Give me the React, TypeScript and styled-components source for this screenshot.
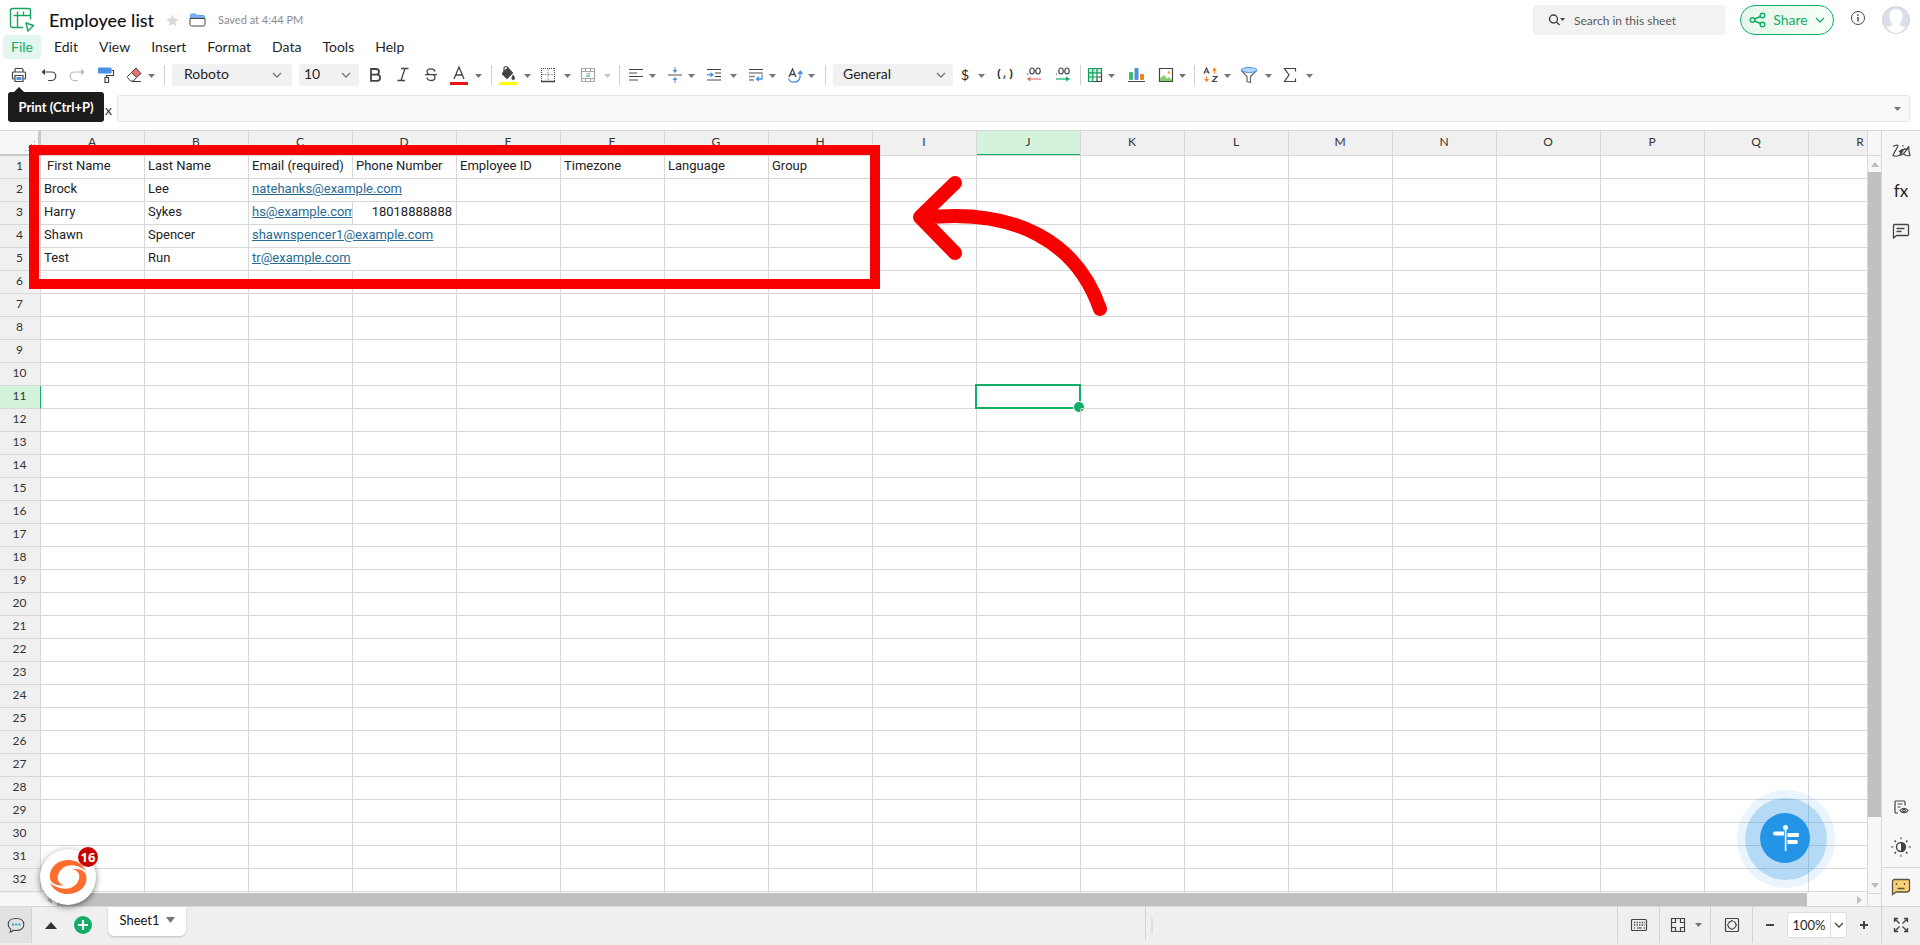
import React from "react";
import styled, { createGlobalStyle, css } from "styled-components";

const GlobalStyle = createGlobalStyle`
  * { box-sizing: border-box; }
  body { margin: 0; background: #fff; color: #1f1f1f; font: 14px/20px Lato, "Liberation Sans", sans-serif; }
  button, input, select { font: inherit; color: inherit; margin: 0; }
  svg { display: block; flex: none; }
`;

const LINE = "#d8d8d8";
const GREEN = "#12ad67";

/* ---------- shell ---------- */

const Shell = styled.div`
  position: relative;
  display: flex;
  flex-direction: column;
  height: 100vh;
  overflow: hidden;
`;

const PlainButton = styled.button`
  display: flex;
  align-items: center;
  justify-content: center;
  border: 0;
  padding: 0;
  background: none;
  cursor: pointer;
`;

/* ---------- title bar ---------- */

const TitleBar = styled.header`
  display: flex;
  align-items: center;
  justify-content: space-between;
  height: 35px;
  padding: 5px 10px 0 9px;
`;

const TitleSide = styled.div`
  display: flex;
  align-items: center;
`;

const DocTitle = styled.h1`
  margin: 0 12px 0 14px;
  font-size: 18px;
  line-height: 24px;
  font-weight: 500;
  color: #111;
`;

const FolderButton = styled(PlainButton)`
  margin-left: 10px;
`;

const SavedNote = styled.span`
  margin-left: 12px;
  font-size: 11px;
  color: #8b8b8b;
`;

const SearchBox = styled.label`
  display: flex;
  align-items: center;
  gap: 8px;
  width: 192px;
  height: 30px;
  padding-left: 15px;
  border-radius: 3px;
  background: #f2f2f2;
`;

const SearchInput = styled.input`
  flex: 1;
  min-width: 0;
  border: 0;
  padding: 2px 0 0;
  outline: 0;
  background: none;
  font-size: 12px;
  &::placeholder { color: #5a5a5a; opacity: 1; }
`;

const ShareButton = styled(PlainButton)`
  gap: 7px;
  width: 94px;
  height: 30px;
  margin: 0 16px 0 15px;
  border: 1px solid ${GREEN};
  border-radius: 15px;
  background: linear-gradient(90deg, #e6f5ea, #f8fff8);
  color: ${GREEN};
`;

const InfoButton = styled(PlainButton)`
  width: 16px;
  height: 16px;
  margin: 0 16px 4px 0;
`;

/* ---------- menu ---------- */

const MenuBar = styled.nav`
  display: flex;
  gap: 5px;
  padding-left: 3px;
  height: 25px;
  padding-bottom: 1px;
`;

const MenuItem = styled(PlainButton)<{ $active?: boolean }>`
  padding: 0 8px;
  border-radius: 4px;
  color: ${(p) => (p.$active ? GREEN : "#1f1f1f")};
  background: ${(p) => (p.$active ? "#e3f6f0" : "none")};
`;

/* ---------- toolbar ---------- */

const Toolbar = styled.div`
  display: flex;
  align-items: center;
  height: 30px;
`;

const Tools = styled.div<{ $gap: number; $before?: number; $after?: number }>`
  display: flex;
  align-items: center;
  gap: ${(p) => p.$gap}px;
  padding: 0 ${(p) => p.$after ?? 0}px 0 ${(p) => p.$before ?? 0}px;
`;

const Tool = styled(PlainButton)`
  width: 20px;
  height: 22px;
`;

const SplitTool = styled.div<{ $gap?: number }>`
  display: flex;
  align-items: center;
  gap: ${(p) => p.$gap ?? 1}px;
`;

const CaretButton = styled(PlainButton)<{ $faint?: boolean }>`
  width: 10px;
  height: 22px;
  padding-top: 1px;
  color: ${(p) => (p.$faint ? "#c4c4c4" : "#777")};
`;

const ToolDivider = styled.span<{ $after?: number }>`
  width: 1px;
  height: 20px;
  margin: 0 ${(p) => p.$after ?? 6}px 0 7px;
  background: #cfcfcf;
`;

const SelectWrap = styled.label<{ $width: number; $end: number }>`
  display: flex;
  align-items: center;
  position: relative;
  width: ${(p) => p.$width}px;
  height: 22px;
  border-radius: 3px;
  background: #f1f1f1;
  svg { position: absolute; right: ${(p) => p.$end}px; pointer-events: none; }
`;

const Select = styled.select<{ $start: number }>`
  appearance: none;
  width: 100%;
  height: 22px;
  border: 0;
  padding: 0 0 2px ${(p) => p.$start}px;
  background: none;
`;

const Glyph = styled.span<{ $size?: number }>`
  font-size: ${(p) => p.$size ?? 14}px;
  line-height: 20px;
`;

const MonoGlyph = styled.span`
  font: 700 10px/20px "Liberation Mono", monospace;
`;

/* ---------- formula bar ---------- */

const FormulaBar = styled.div`
  display: flex;
  align-items: center;
  gap: 5px;
  height: 40px;
  padding: 5px 10px 8px 8px;
`;

const Tooltip = styled.div`
  position: relative;
  z-index: 5;
  width: 96px;
  height: 30px;
  margin: -3px 0 0;
  border-radius: 3px;
  background: #1c1c1c;
  color: #fff;
  font-size: 13px;
  font-weight: 700;
  line-height: 30px;
  text-align: center;
  white-space: nowrap;
  &::before {
    content: "";
    position: absolute;
    left: 6px;
    top: -5px;
    border: 5px solid transparent;
    border-top: 0;
    border-bottom-color: #1c1c1c;
  }
`;

const FxMark = styled.span`
  width: 7px;
  margin-left: -4px;
  padding-top: 3px;
  font-size: 14px;
  color: #333;
`;

const FormulaField = styled.div`
  display: flex;
  align-items: center;
  flex: 1;
  height: 27px;
  padding-right: 8px;
  border: 1px solid #e4e4e4;
  border-radius: 3px;
  background: #f9f9f9;
  color: #777;
`;

const FormulaInput = styled.input`
  flex: 1;
  border: 0;
  outline: 0;
  background: none;
`;

/* ---------- workspace ---------- */

const Workspace = styled.main`
  display: flex;
  flex: 1;
  min-height: 0;
  border-top: 1px solid ${LINE};
`;

const SheetPane = styled.div`
  display: flex;
  flex-direction: column;
  flex: 1;
  min-width: 0;
`;

const GridRow = styled.div`
  display: flex;
  flex: 1;
  min-height: 0;
`;

const GridClip = styled.div`
  flex: 1;
  min-width: 0;
  overflow: hidden;
`;

const Grid = styled.table`
  table-layout: fixed;
  border-collapse: separate;
  border-spacing: 0;
  width: 1913px;
`;

const RowHeadCol = styled.col` width: 41px; `;
const DataCol = styled.col` width: 104px; `;

const Corner = styled.th`
  height: 25px;
  padding: 0 2px 3px;
  border-right: 3px solid #c9c9c9;
  border-bottom: 2px solid #c9c9c9;
  background: #f7f7f7;
  vertical-align: bottom;
  svg { margin-left: auto; }
`;

const ColHead = styled.th<{ $on?: boolean }>`
  height: 25px;
  padding: 0 1px 2px 0;
  border-right: 1px solid ${LINE};
  border-bottom: 1px solid ${LINE};
  background: ${(p) => (p.$on ? "#d4f3dc" : "#f0f0f0")};
  box-shadow: ${(p) => (p.$on ? `inset 0 -1px ${GREEN}` : "none")};
  color: #333;
  font-size: 12px;
  font-weight: 400;
  line-height: 18px;
`;

const RowHead = styled(ColHead)`
  height: 23px;
  ${(p) => p.$on && css`border-right-color: ${GREEN}; box-shadow: none;`}
`;

const Cell = styled.td<{ $right?: boolean; $indent?: boolean }>`
  position: relative;
  height: 23px;
  max-width: 0;
  padding: 0 ${(p) => (p.$right ? 4 : 0)}px 2px ${(p) => (p.$indent ? 6 : 3)}px;
  border-right: 1px solid ${LINE};
  border-bottom: 1px solid ${LINE};
  color: #222;
  font-family: Roboto, sans-serif;
  font-size: 13px;
  line-height: 18px;
  text-align: ${(p) => (p.$right ? "right" : "left")};
  white-space: nowrap;
`;

const CellClip = styled.div`
  overflow: hidden;
`;

const MailLink = styled.a`
  color: #2a6a94;
  text-decoration: underline;
`;

const CellCursor = styled.span`
  position: absolute;
  inset: -2px -1px -1px -2px;
  border: 2px solid ${GREEN};
  &::after {
    content: "";
    position: absolute;
    right: -6px;
    bottom: -6px;
    width: 10px;
    height: 10px;
    border: 1px solid #fff;
    border-radius: 50%;
    background: ${GREEN};
  }
`;

const VScroll = styled.div`
  display: flex;
  flex-direction: column;
  align-items: center;
  width: 14px;
  border-left: 1px solid ${LINE};
  background: #f7f7f7;
  color: #bdbdbd;
`;

const VScrollHead = styled.div`
  width: 100%;
  height: 25px;
  border-bottom: 1px solid ${LINE};
`;

const ScrollArrow = styled.span`
  display: flex;
  align-items: center;
  justify-content: center;
  width: 13px;
  height: 16px;
`;

const VTrack = styled.div`
  flex: 1;
  width: 100%;
  padding-bottom: 60px;
`;

const Thumb = styled.div`
  height: 100%;
  background: #c0c0c0;
`;

const HScroll = styled.div`
  display: flex;
  align-items: stretch;
  height: 13px;
  padding-left: 41px;
  background: #f7f7f7;
  color: #bdbdbd;
`;

const HArrow = styled.span`
  display: flex;
  align-items: center;
  justify-content: center;
  width: 16px;
`;

const HTrack = styled.div`
  flex: 1;
  padding-right: 44px;
`;

const ScrollCorner = styled.div`
  width: 14px;
  border: 1px solid ${LINE};
  border-width: 1px 0 0 1px;
`;

const SideBar = styled.aside`
  display: flex;
  flex-direction: column;
  align-items: center;
  width: 39px;
  border-left: 1px solid ${LINE};
  background: #f7f7f7;
`;

const SideTool = styled(PlainButton)`
  width: 38px;
  height: 40px;
`;

const SideFill = styled.span` flex: 1; `;

const SideFoot = styled(SideTool)`
  height: 39px;
  border-top: 1px solid ${LINE};
`;

/* ---------- footer ---------- */

const Footer = styled.footer`
  display: flex;
  height: 39px;
  padding-bottom: 2px;
  border-top: 1px solid ${LINE};
  background: #efefef;
`;

const ChatCell = styled(PlainButton)`
  width: 32px;
  border-right: 1px solid #d4d4d4;
  background: #e2e2e2;
`;

const FootTool = styled(PlainButton)<{ $width: number }>`
  width: ${(p) => p.$width}px;
`;

const AddSheet = styled(PlainButton)`
  align-self: center;
  width: 18px;
  height: 18px;
  margin: 0 16px 0 4px;
  border-radius: 50%;
  background: ${GREEN};
`;

const SheetTab = styled(PlainButton)`
  gap: 6px;
  width: 78px;
  height: 29px;
  padding: 0 0 3px;
  border-radius: 0 0 6px 6px;
  background: #fff;
  box-shadow: 0 1px 2px rgba(0, 0, 0, 0.2);
  color: #111;
  font-size: 13px;
  svg { color: #777; }
`;

const Grip = styled.div`
  margin: 0 0 3px;
  padding: 11px 5px;
  border-left: 1px solid #d4d4d4;
  &::after {
    content: "";
    display: block;
    width: 2px;
    height: 16px;
    background: #dedede;
  }
`;

const Gap = styled.span<{ $share: number }>` flex: ${(p) => p.$share}; `;

const FootGroup = styled.div<{ $width: number }>`
  display: flex;
  align-items: center;
  justify-content: center;
  gap: 8px;
  width: ${(p) => p.$width}px;
  border-left: 1px solid #d4d4d4;
  color: #777;
`;

const ZoomBox = styled.div`
  display: flex;
  width: 60px;
  height: 26px;
  border: 1px solid #ddd;
  border-radius: 3px;
  background: #fff;
  color: #1f1f1f;
`;

const ZoomInput = styled.input`
  width: 43px;
  border: 0;
  border-right: 1px solid #ddd;
  padding: 0;
  background: none;
  text-align: center;
  font-size: 13px;
`;

/* ---------- overlays ---------- */

const HighlightFrame = styled.div`
  position: absolute;
  left: 29px;
  top: 145px;
  width: 851px;
  height: 144px;
  border: 10px solid #f70000;
`;

const HighlightArrow = styled.svg`
  position: absolute;
  left: 910px;
  top: 170px;
`;

const BrandBubble = styled.button`
  position: absolute;
  left: 40px;
  bottom: 40px;
  display: flex;
  align-items: center;
  justify-content: center;
  width: 56px;
  height: 56px;
  border: 0;
  padding: 0;
  border-radius: 50%;
  background: #fff;
  box-shadow: 0 2px 6px rgba(0, 0, 0, 0.5);
`;

const Badge = styled.span`
  position: absolute;
  right: -2px;
  top: -2px;
  width: 20px;
  height: 20px;
  border-radius: 50%;
  background: #c90000;
  color: #fff;
  font: 700 13px/20px "Open Sans", sans-serif;
`;

const GuideBubble = styled.button`
  position: absolute;
  right: 85px;
  bottom: 57px;
  display: flex;
  align-items: center;
  justify-content: center;
  width: 98px;
  height: 98px;
  border: 8px solid rgba(36, 148, 230, 0.1);
  padding: 0 2px 2px 0;
  border-radius: 50%;
  background: rgba(36, 148, 230, 0.34);
  background-clip: padding-box;
`;

const GuideCore = styled.span`
  display: flex;
  align-items: center;
  justify-content: center;
  width: 50px;
  height: 50px;
  border-radius: 50%;
  background: #2494e6;
`;

/* ---------- drawings ---------- */

type IconProps = { w?: number; h?: number; s?: string; sw?: number; children: React.ReactNode };
const Icon = ({ w = 18, h = 18, s = "#444", sw = 1, children }: IconProps) => (
  <svg width={w} height={h} viewBox={`0 0 ${w} ${h}`} fill="none" stroke={s} strokeWidth={sw} aria-hidden="true">
    {children}
  </svg>
);

const Caret = ({ w = 7, h = 4 }: { w?: number; h?: number }) => (
  <svg width={w} height={h} viewBox="0 0 6 4" fill="currentColor" preserveAspectRatio="none" aria-hidden="true">
    <path d="M0 0h6L3 4z" />
  </svg>
);

const Chevron = ({ s = "#777" }: { s?: string }) => (
  <Icon w={10} h={7} s={s} sw={1.3}><path d="M1 1l4 4 4-4" /></Icon>
);

const LogoIcon = () => (
  <Icon w={26} h={26} s="#17a45c" sw={1.4}>
    <path d="M14 20.500H3.500a2 2 0 0 1-2-2V3.500a2 2 0 0 1 2-2h16a2 2 0 0 1 2 2v9M4.500 8.500h17M8.500 4.500v16M14.500 4.500v4" />
    <path d="M17 16l7.500 2.500-5.500 5.500z" strokeLinejoin="round" />
  </Icon>
);
const StarIcon = () => (
  <svg width="13" height="13" viewBox="0 0 24 24" fill="#d9d9d9" aria-hidden="true">
    <path d="M12 1l3.300 7.300 8 .9-6 5.400 1.700 7.900L12 18.500l-7 4 1.700-7.900-6-5.400 8-.9z" />
  </svg>
);
const FolderIcon = () => (
  <Icon w={17} h={14}>
    <path d="M1.500 5V2a1 1 0 0 1 1-1h4l2 1.500h6a1 1 0 0 1 1 1V5z" fill="#7db4f5" stroke="#5b9df0" />
    <path d="M1 5.500h15v6a1.500 1.500 0 0 1-1.500 1.500h-12A1.500 1.500 0 0 1 1 11.500z" fill="#fff" />
  </Icon>
);
const SearchIcon = () => (
  <Icon w={18} h={14} sw={1.4}>
    <circle cx="5.500" cy="6" r="4" /><path d="M8.500 9l3 3" />
    <path d="M12 5h5l-2.500 3z" fill="#444" stroke="none" />
  </Icon>
);
const ShareIcon = () => (
  <Icon w={17} h={16} s={GREEN} sw={1.4}>
    <circle cx="3.500" cy="8" r="2.300" /><circle cx="13.500" cy="3.500" r="2.300" /><circle cx="13.500" cy="12.500" r="2.300" />
    <path d="M5.700 7l5.600-2.500M5.700 9l5.600 2.500" />
  </Icon>
);
const InfoIcon = () => (
  <Icon w={16} h={16}><circle cx="8" cy="8" r="6.500" /><path d="M8 7v4.500M8 4.200v1.500" strokeWidth="1.500" /></Icon>
);
const AvatarIcon = () => (
  <svg width="28" height="28" viewBox="0 0 28 28" aria-label="Account">
    <circle cx="14" cy="14" r="13.500" fill="#dadfeb" stroke="#d5d5d5" />
    <path d="M14 3c4.500 0 6.500 3 6.500 7 0 4-1.500 6-3 8 .5 2 4 2.500 6 3.500C21 25 18 27 14 27s-7-2-9.500-5.500c2-1 5.500-1.500 6-3.500-1.500-2-3-4-3-8 0-4 2-7 6.500-7z" fill="#fff" />
  </svg>
);

const PrintIcon = () => (
  <Icon w={16} h={16} sw={1.2}>
    <path d="M4 5V2.500A1 1 0 0 1 5 1.500h6a1 1 0 0 1 1 1V5" />
    <path d="M3.500 12H2.500a1 1 0 0 1-1-1V6a1 1 0 0 1 1-1h11a1 1 0 0 1 1 1v5a1 1 0 0 1-1 1h-1" />
    <path d="M4 8.500h8v6H4z" fill="#fff" /><path d="M5.500 10h5v3h-5z" fill="#4a90e2" stroke="none" />
  </Icon>
);
const UndoIcon = ({ flip }: { flip?: boolean }) => (
  <Icon w={17} h={14} s={flip ? "#b9b9b9" : "#444"} sw={1.2}>
    <g transform={flip ? "translate(17 0) scale(-1 1)" : undefined}>
      <path d="M2 4h9.500a4 4 0 0 1 0 8.500H8" /><path d="M5 .8L1.500 4 5 7.200z" fill={flip ? "#b9b9b9" : "#444"} stroke="none" />
    </g>
  </Icon>
);
const PaintIcon = () => (
  <Icon w={18} h={18} sw={1.2}>
    <rect x="1" y="1.500" width="13.500" height="6" rx="1" fill="#4a90e2" stroke="none" />
    <path d="M14.500 4.500h2V9.500h-7v2.500" /><path d="M8 11.500h3.500v5H8z" />
  </Icon>
);
const EraserIcon = () => (
  <Icon w={18} h={16}>
    <path d="M10 1l5 5.500-4.500 4L5.500 5.500z" fill="#e57373" />
    <path d="M5.500 5.500l5 5L7.500 14H4.500L1.500 10.500V9.500z" fill="#fff" /><path d="M6 14.500h9" />
  </Icon>
);
const BoldIcon = () => (
  <Icon w={14} h={16} sw={1.8}><path d="M3 2h5.200a2.800 2.800 0 0 1 0 5.600H3zM3 7.600h6a3 3 0 0 1 0 6.200H3z" /></Icon>
);
const ItalicIcon = () => <Icon w={14} h={16} sw={1.3}><path d="M5 1.500h7.500M1.500 13.500H9M9 1.500L5 13.500" /></Icon>;
const StrikeIcon = () => (
  <Icon w={14} h={16} sw={1.3}>
    <path d="M11 4.500C10.500 2.500 9 1.800 7 1.800c-2.200 0-4 1-4 2.900 0 1.300 1 2.200 2.500 2.900M3 10.500c.3 2 1.800 3 4 3s4-1 4-3c0-1.200-.6-2-1.500-2.500M1 7.700h12" />
  </Icon>
);
const TextColorIcon = () => (
  <Icon w={18} h={20} sw={1.300}>
    <path d="M4 14L9 2l5 12M5.800 10h6.400" /><path d="M0 17h18v3H0z" fill="#ea1515" stroke="none" />
  </Icon>
);
const BucketIcon = () => (
  <Icon w={18} h={20} sw={1.2}>
    <path d="M4 7.500l5-4.500 4.500 5-5.500 5.500-4.500-4.500z" fill="#444" /><path d="M5 7V3.500a2 2 0 0 1 4 0V6" />
    <path d="M14 9.500c1.500 2 2 3 2 3.800a1.800 1.800 0 0 1-3.600 0c0-.8.600-1.800 1.600-3.800z" fill="#444" stroke="none" />
    <path d="M0 17h18v3H0z" fill="#ff0" stroke="none" />
  </Icon>
);
const BorderIcon = () => (
  <Icon w={16} h={16}>
    <path d="M1.500 1v13M14.500 1v13M1 1.500h14" strokeDasharray="1 1" />
    <path d="M8 2v12M2 7.500h12" strokeDasharray="2 1" stroke="#999" /><path d="M1 14.500h14" strokeWidth="1.500" />
  </Icon>
);
const MergeIcon = () => (
  <Icon w={16} h={16} s="#a8a8a8" sw={1.2}>
    <path d="M1.500 1.500h13v13h-13zM1.500 4.500h13M1.500 11.500h13M5.500 1.500v3M10.500 1.500v3M5.500 11.500v3M10.500 11.500v3" />
    <path d="M6.500 6.800c1-.6 3-.6 3 .7v2.700M9.500 8.200c-2 0-3 .2-3 1s2 .8 3-.2" stroke="#8fd3ae" />
  </Icon>
);
const AlignIcon = () => (
  <Icon w={16} h={14}>
    <path d="M1 1.500h14M1 8.500h14" /><path d="M1 5h8M1 12h9" stroke="#888" strokeWidth="1.500" />
  </Icon>
);
const VAlignIcon = () => (
  <Icon w={16} h={16} s="#4a90e2">
    <path d="M1 8h14" stroke="#888" strokeWidth="1.500" />
    <path d="M8 0v4M8 16v-4" /><path d="M5.500 3h5L8 6zM5.500 13h5L8 10z" fill="#4a90e2" stroke="none" />
  </Icon>
);
const IndentIcon = () => (
  <Icon w={16} h={14}>
    <path d="M1 1.500h14M9 5h6M9 8.500h6" /><path d="M1 12h14" stroke="#888" strokeWidth="1.500" />
    <path d="M1 6.700h4" stroke="#4a90e2" strokeWidth="1.300" /><path d="M4.500 4l3.500 2.700-3.500 2.800z" fill="#4a90e2" stroke="none" />
  </Icon>
);
const WrapIcon = () => (
  <Icon w={16} h={14}>
    <path d="M1 1.500h14" /><path d="M1 5h14M1 8.500h6M1 12h5" stroke="#888" strokeWidth="1.500" />
    <path d="M14 6.500v4.500H10" stroke="#4a90e2" strokeWidth="1.300" /><path d="M11 8l-3.500 3 3.500 2.800z" fill="#4a90e2" stroke="none" />
  </Icon>
);
const RotateIcon = () => (
  <Icon w={17} h={17} sw={1.3}>
    <path d="M2 10L5.500 2 9 10M3.300 7.500h4.500" />
    <path d="M1.500 11.500c1.500 4.500 10 5.500 11.500-1V6.500" stroke="#4a90e2" /><path d="M10.200 7l3.300-4 2.500 4z" fill="#4a90e2" stroke="none" />
  </Icon>
);
const DecimalIcon = ({ more }: { more?: boolean }) => (
  <Icon w={18} h={18} sw={1.2}>
    <path d="M2 8h1.200" /><ellipse cx="7" cy="5" rx="2.200" ry="3" /><ellipse cx="13" cy="5" rx="2.200" ry="3" />
    {more ? (
      <g stroke={GREEN} fill={GREEN}><path d="M2 13h11" /><path d="M12 10.500l4 2.500-4 2.500z" stroke="none" /></g>
    ) : (
      <g stroke="#e57373" fill="#e57373"><path d="M4 13h12" /><path d="M5.500 10.500L1.500 13l4 2.500z" stroke="none" /></g>
    )}
  </Icon>
);
const TableIcon = () => (
  <Icon w={16} h={16} s="#0c9d58" sw={1.2}>
    <path d="M1.500 1.500h13v4h-9v9h-4z" fill="#c9efd8" stroke="none" />
    <path d="M10 14.500h4.500V6M5.500 14.500H10M10 10h4.500M10 10v4.500" stroke="#444" />
    <path d="M1.500 1.500h13V6M1.500 1.500v13h4M1.500 5.800h13M1.500 10H10M5.800 1.500v13M10 1.500V10" />
  </Icon>
);
const ChartIcon = () => (
  <Icon w={18} h={16}>
    <rect x="2" y="5" width="4" height="8" rx="1" fill="#45b96b" stroke="none" />
    <rect x="7.500" y="1" width="4" height="12" rx="1" fill="#4a90e2" stroke="none" />
    <rect x="13" y="7" width="4" height="6" rx="1" fill="#f58220" stroke="none" /><path d="M1 14.500h17" />
  </Icon>
);
const ImageIcon = () => (
  <Icon w={16} h={16} sw={1.2}>
    <path d="M1.500 1.500h13v13h-13z" fill="#fff" /><path d="M2 14v-2.500L6 8l3 3.500 2-1.500 3 3v1z" fill="#85cf72" stroke="none" />
    <circle cx="11" cy="5.500" r="1.300" fill="#f5b11d" stroke="none" />
  </Icon>
);
const SortIcon = () => (
  <Icon w={16} h={16} sw={1.2}>
    <path d="M1 6.500L3.500 1 6 6.500M2 5h3.200M9.500 9.500H14L9.500 14.500h4.700" />
    <path d="M11.500 6.500V3M3.500 9.500v3" stroke="#f58220" />
    <path d="M9 3.500L11.500.5 14 3.500zM1 12l2.500 3L6 12z" fill="#f58220" stroke="none" />
  </Icon>
);
const FilterIcon = () => (
  <Icon w={18} h={18} sw={1.2}>
    <path d="M1.500 4.500L7 10.500v5l3.500 1v-6l6-6" fill="#fff" stroke="#666" />
    <ellipse cx="9" cy="4" rx="7.500" ry="2.500" fill="#b5d8ff" stroke="#4a90e2" />
  </Icon>
);
const SigmaIcon = () => (
  <Icon w={14} h={16} sw={1.2}><path d="M12.500 4.500V1.500h-11L6 8l-4.500 6.500h11v-3" /></Icon>
);
const CornerDots = () => (
  <svg width="12" height="10" viewBox="0 0 12 10" fill="#999" aria-hidden="true">
    <path d="M10 0h1v1h-1zM7 3h1v1H7zM10 3h1v1h-1zM4 6h1v1H4zM7 6h1v1H7zM10 6h1v1h-1zM1 9h1v1H1zM4 9h1v1H4zM7 9h1v1H7zM10 9h1v1h-1z" />
  </svg>
);

const ZiaIcon = () => (
  <Icon w={20} h={16} sw={1.2}>
    <path d="M2 3.500C4 2.200 6.500 1.800 7 2.600S3.500 8 2 12.500c1.500.8 4.500.8 6.500-.3 1.500-1.200 3.500-4.500 4-5.700-2.500 1.500-3.500 4-2.800 5.700 2 .2 6-5 8-9 0 2 .3 6.800 1.300 9.300-1.500.6-5.500.2-7-2.500M12 2v1.400M8 9c2-2 6-3.500 9-3" />
  </Icon>
);
const CommentIcon = () => (
  <Icon w={18} h={18} sw={1.3}>
    <path d="M1.500 16V3.500a1 1 0 0 1 1-1h13a1 1 0 0 1 1 1v9a1 1 0 0 1-1 1H4.500z" strokeLinejoin="round" /><path d="M4.500 6.500h8M4.500 9.500h5" />
  </Icon>
);
const PageEyeIcon = () => (
  <Icon w={16} h={16} sw={1.2}>
    <path d="M5 14H3a1 1 0 0 1-1-1V3a1 1 0 0 1 1-1h8a1 1 0 0 1 1 1v3.500M4.500 5h5M4.500 8h3" />
    <path d="M7 11.500c2-3 6-3 8 0-2 3-6 3-8 0z" fill="#f7f7f7" /><circle cx="11" cy="11.500" r="1.300" />
  </Icon>
);
const SunIcon = () => (
  <Icon w={20} h={20} sw={1.4}>
    <circle cx="10" cy="10" r="4.500" /><path d="M10 5.500a4.500 4.500 0 0 1 0 9z" fill="#444" stroke="none" />
    <path d="M10 0v2.500M10 17.500V20M0 10h2.500M17.500 10H20" stroke="#888" /><path d="M3.500 3.500l1.500 1.500M15 15l1.500 1.500M16.500 3.500L15 5M5 15l-1.500 1.500" />
  </Icon>
);
const FaceIcon = () => (
  <Icon w={20} h={18} s="#5c5444" sw={1.3}>
    <path d="M1.500 16.500V3.500a2 2 0 0 1 2-2h14a1 1 0 0 1 1 1v9c0 1.500-1 2.500-3 2.500H5z" fill="#fbcf74" />
    <path d="M5.500 5v2M13.500 5v2M6.500 10.500h7" />
  </Icon>
);
const ChatIcon = () => (
  <Icon w={18} h={16} sw={1.1}>
    <path d="M3 15c.8-1 1-2 .8-2.800C2 11 1.200 9.500 1.200 7.500c0-4 3.500-6 7.800-6s7.800 2 7.800 6-3.500 6-7.800 6c-1 0-1.800 0-2.500-.3C5.500 14.500 4 15 3 15z" />
    <path d="M5 7.500h8.500" stroke="#2f9fc4" strokeWidth="2" strokeDasharray="2 1.200" />
  </Icon>
);
const KeyboardIcon = () => (
  <Icon w={18} h={14} sw={1.2}>
    <rect x="1.500" y="1.500" width="15" height="11" rx="1" /><path d="M4 4.500h11M4 7h11" strokeDasharray="1.300 1.300" strokeWidth="1.500" /><path d="M4 10h1.300M7 10h5M13.500 10H15" strokeWidth="1.500" stroke="#777" />
  </Icon>
);
const FreezeIcon = () => (
  <Icon w={16} h={16} sw={1.2}>
    <path d="M1.500 1.500h13v13h-13zM5.500 1.500v4h-4M10.500 1.500v4h4M5.500 14.500v-4h-4M10.500 14.500v-4h4" />
  </Icon>
);
const FocusIcon = () => (
  <Icon w={16} h={16} sw={1.2}>
    <rect x="1.500" y="1.500" width="13" height="13" rx="1" />
    <circle cx="8" cy="8" r="4" strokeDasharray="4.280 2" strokeDashoffset="-1" />
    <path d="M8 3v1.500M8 11.500V13M3 8h1.500M11.500 8H13" strokeWidth="1.500" />
  </Icon>
);
const ExpandIcon = () => (
  <Icon w={16} h={16} sw={1.3}>
    <path d="M1.500 5V1.500H5M1.500 1.500l5 5M11 1.500h3.500V5M14.500 1.500l-5 5M1.500 11v3.500H5M1.500 14.500l5-5M11 14.500h3.500V11M14.500 14.500l-5-5" />
  </Icon>
);
const SwirlIcon = () => (
  <svg width="38" height="36" viewBox="0 0 38 36" fill="#ff6d2e" aria-hidden="true">
    <path d="M37 12C33 4 26 .5 18.500 1 8 1.500 .8 8.500 .8 17.500c0 6 5 9.500 14 8.800C9 24.500 7.500 20 9.500 15 12 8.500 18 5.500 25 6.500c5 .7 8.500 2.500 12 5.500z" />
    <path d="M1 24c4 8 11 11.500 18.500 11C30 34.500 37.500 28 37.500 19c0-6-5-9.500-13.500-8.800 6 1.800 7.500 6 5.500 11C27 27.500 21 30.500 13.500 29.500 8 28.800 4.500 27 1 24z" />
  </svg>
);
const SignpostIcon = () => (
  <svg width="28" height="28" viewBox="0 0 28 28" fill="#fff" aria-hidden="true">
    <circle cx="14.500" cy="3.500" r="2.500" /><path d="M13.800 6h1.600v21h-1.600z" />
    <path d="M3.500 7.500H13v4H3.500L1.500 9.500zM16.500 9h11l1 2-1 2h-11zM16.500 16h9.500l1 2-1 2h-9.500z" />
  </svg>
);

/* ---------- pieces ---------- */

const DropTool = ({ label, gap, faint, children }: { label: string; gap?: number; faint?: boolean; children: React.ReactNode }) => (
  <SplitTool $gap={gap}>
    <Tool aria-label={label}>{children}</Tool>
    <CaretButton aria-label={`${label} options`} $faint={faint}><Caret /></CaretButton>
  </SplitTool>
);

const Picker = ({ label, value, width, start, end }: { label: string; value: string; width: number; start: number; end: number }) => (
  <SelectWrap $width={width} $end={end}>
    <Select aria-label={label} $start={start} defaultValue={value}><option>{value}</option></Select>
    <Chevron />
  </SelectWrap>
);

const COLUMNS = "ABCDEFGHIJKLMNOPQR".split("");
const ROW_COUNT = 32;

type CellData = { text: string; mail?: boolean; span?: number; right?: boolean; indent?: boolean };
const t = (text: string): CellData => ({ text });
const DATA: CellData[][] = [
  [{ text: "First Name", indent: true }, t("Last Name"), t("Email (required)"), t("Phone Number"), t("Employee ID"), t("Timezone"), t("Language"), t("Group")],
  [t("Brock"), t("Lee"), { text: "natehanks@example.com", mail: true, span: 2 }],
  [t("Harry"), t("Sykes"), { text: "hs@example.com", mail: true }, { text: "18018888888", right: true }],
  [t("Shawn"), t("Spencer"), { text: "shawnspencer1@example.com", mail: true, span: 2 }],
  [t("Test"), t("Run"), { text: "tr@example.com", mail: true, span: 2 }],
];

const SheetRow = ({ index }: { index: number }) => {
  const filled = DATA[index] ?? [];
  const used = filled.reduce((n, c) => n + (c.span ?? 1), 0);
  const isActive = index === 10;
  return (
    <tr>
      <RowHead scope="row" $on={isActive}>{index < ROW_COUNT ? index + 1 : null}</RowHead>
      {filled.map((c) => (
        <Cell key={c.text} colSpan={c.span} $right={c.right} $indent={c.indent}>
          <CellClip>{c.mail ? <MailLink href={`mailto:${c.text}`}>{c.text}</MailLink> : c.text}</CellClip>
        </Cell>
      ))}
      {COLUMNS.slice(used).map((col) => (
        <Cell key={col}>{isActive && col === "J" ? <CellCursor /> : null}</Cell>
      ))}
    </tr>
  );
};

const MENUS = ["File", "Edit", "View", "Insert", "Format", "Data", "Tools", "Help"];

export default function App() {
  return (
    <>
      <GlobalStyle />
      <Shell>
        <TitleBar>
          <TitleSide>
            <LogoIcon />
            <DocTitle>Employee list</DocTitle>
            <StarIcon />
            <FolderButton aria-label="Move to folder"><FolderIcon /></FolderButton>
            <SavedNote>Saved at 4:44 PM</SavedNote>
          </TitleSide>
          <TitleSide>
            <SearchBox>
              <SearchIcon />
              <SearchInput aria-label="Search in this sheet" placeholder="Search in this sheet" />
            </SearchBox>
            <ShareButton><ShareIcon />Share<Chevron s={GREEN} /></ShareButton>
            <InfoButton aria-label="Information"><InfoIcon /></InfoButton>
            <AvatarIcon />
          </TitleSide>
        </TitleBar>

        <MenuBar>
          {MENUS.map((m) => <MenuItem key={m} $active={m === "File"}>{m}</MenuItem>)}
        </MenuBar>

        <Toolbar>
          <Tools $gap={9} $before={9} $after={1}>
            <Tool aria-label="Print"><PrintIcon /></Tool>
            <Tool aria-label="Undo"><UndoIcon /></Tool>
            <Tool aria-label="Redo"><UndoIcon flip /></Tool>
            <Tool aria-label="Format painter"><PaintIcon /></Tool>
            <DropTool label="Clear"><EraserIcon /></DropTool>
          </Tools>
          <ToolDivider />
          <Tools $gap={7} $before={1}>
            <Picker label="Font" value="Roboto" width={120} start={12} end={10} />
            <Picker label="Font size" value="10" width={60} start={5} end={8} />
          </Tools>
          <Tools $gap={8} $before={6} $after={1}>
            <Tool aria-label="Bold"><BoldIcon /></Tool>
            <Tool aria-label="Italic"><ItalicIcon /></Tool>
            <Tool aria-label="Strikethrough"><StrikeIcon /></Tool>
            <DropTool label="Text color" gap={4}><TextColorIcon /></DropTool>
          </Tools>
          <ToolDivider />
          <Tools $gap={6}>
            <DropTool label="Fill color" gap={4}><BucketIcon /></DropTool>
            <DropTool label="Borders" gap={4}><BorderIcon /></DropTool>
            <DropTool label="Merge" gap={4} faint><MergeIcon /></DropTool>
          </Tools>
          <ToolDivider />
          <Tools $gap={8} $after={2}>
            <DropTool label="Horizontal align"><AlignIcon /></DropTool>
            <DropTool label="Vertical align"><VAlignIcon /></DropTool>
            <DropTool label="Indent" gap={4}><IndentIcon /></DropTool>
            <DropTool label="Wrap"><WrapIcon /></DropTool>
            <DropTool label="Rotate"><RotateIcon /></DropTool>
          </Tools>
          <ToolDivider />
          <Tools $gap={9} $before={1}>
            <Picker label="Number format" value="General" width={120} start={10} end={7} />
          </Tools>
          <Tools $gap={9} $before={2}>
            <DropTool label="Currency"><Glyph>$</Glyph></DropTool>
            <Tool aria-label="Comma style"><MonoGlyph>(,)</MonoGlyph></Tool>
            <Tool aria-label="Decrease decimals"><DecimalIcon /></Tool>
            <Tool aria-label="Increase decimals"><DecimalIcon more /></Tool>
          </Tools>
          <ToolDivider $after={4} />
          <Tools $gap={10}>
            <DropTool label="Table"><TableIcon /></DropTool>
            <Tool aria-label="Chart"><ChartIcon /></Tool>
            <DropTool label="Image"><ImageIcon /></DropTool>
          </Tools>
          <ToolDivider />
          <Tools $gap={7}>
            <DropTool label="Sort"><SortIcon /></DropTool>
            <DropTool label="Filter" gap={4}><FilterIcon /></DropTool>
            <DropTool label="Functions" gap={4}><SigmaIcon /></DropTool>
          </Tools>
        </Toolbar>

        <FormulaBar>
          <Tooltip role="tooltip">Print (Ctrl+P)</Tooltip>
          <FxMark>x</FxMark>
          <FormulaField>
            <FormulaInput aria-label="Formula" />
            <Caret />
          </FormulaField>
        </FormulaBar>

        <Workspace>
          <SheetPane>
            <GridRow>
              <GridClip>
                <Grid>
                  <colgroup>
                    <RowHeadCol />
                    {COLUMNS.map((c) => <DataCol key={c} />)}
                  </colgroup>
                  <thead>
                    <tr>
                      <Corner aria-label="Select all"><CornerDots /></Corner>
                      {COLUMNS.map((c) => <ColHead key={c} scope="col" $on={c === "J"}>{c}</ColHead>)}
                    </tr>
                  </thead>
                  <tbody>
                    {Array.from({ length: ROW_COUNT + 1 }, (_, i) => <SheetRow key={i} index={i} />)}
                  </tbody>
                </Grid>
              </GridClip>
              <VScroll>
                <VScrollHead />
                <ScrollArrow><svg width="8" height="5" viewBox="0 0 8 5" fill="currentColor"><path d="M0 5h8L4 0z" /></svg></ScrollArrow>
                <VTrack><Thumb /></VTrack>
                <ScrollArrow><Caret w={8} h={5} /></ScrollArrow>
              </VScroll>
            </GridRow>
            <HScroll>
              <HArrow><svg width="5" height="8" viewBox="0 0 5 8" fill="currentColor"><path d="M5 0v8L0 4z" /></svg></HArrow>
              <HTrack><Thumb /></HTrack>
              <HArrow><svg width="5" height="8" viewBox="0 0 5 8" fill="currentColor"><path d="M0 0v8l5-4z" /></svg></HArrow>
              <ScrollCorner />
            </HScroll>
          </SheetPane>
          <SideBar>
            <SideTool aria-label="Zia"><ZiaIcon /></SideTool>
            <SideTool><Glyph $size={17}>fx</Glyph></SideTool>
            <SideTool aria-label="Comments"><CommentIcon /></SideTool>
            <SideFill />
            <SideTool aria-label="Review"><PageEyeIcon /></SideTool>
            <SideTool aria-label="Theme"><SunIcon /></SideTool>
            <SideFoot aria-label="Feedback"><FaceIcon /></SideFoot>
          </SideBar>
        </Workspace>

        <Footer>
          <ChatCell aria-label="Chat"><ChatIcon /></ChatCell>
          <FootTool $width={38} aria-label="All sheets">
            <svg width="12" height="7" viewBox="0 0 12 7" fill="#333"><path d="M0 7h12L6 0z" /></svg>
          </FootTool>
          <AddSheet aria-label="Add sheet"><Icon w={10} h={10} s="#fff" sw={2}><path d="M5 0v10M0 5h10" /></Icon></AddSheet>
          <SheetTab>Sheet1<Caret w={9} h={6} /></SheetTab>
          <Gap $share={23} />
          <Grip />
          <Gap $share={11} />
          <FootGroup $width={42}><FootTool $width={20} aria-label="Keyboard"><KeyboardIcon /></FootTool></FootGroup>
          <FootGroup $width={51}>
            <FootTool $width={18} aria-label="Freeze"><FreezeIcon /></FootTool>
            <Caret />
          </FootGroup>
          <FootGroup $width={42}><FootTool $width={20} aria-label="Focus"><FocusIcon /></FootTool></FootGroup>
          <FootGroup $width={129}>
            <FootTool $width={18} aria-label="Zoom out"><Icon w={10} h={10} sw={2}><path d="M1 5h8" /></Icon></FootTool>
            <ZoomBox>
              <ZoomInput aria-label="Zoom" defaultValue="100%" />
              <FootTool $width={15} aria-label="Zoom levels"><Chevron s="#444" /></FootTool>
            </ZoomBox>
            <FootTool $width={18} aria-label="Zoom in"><Icon w={10} h={10} sw={2}><path d="M1 5h8M5 1v8" /></Icon></FootTool>
          </FootGroup>
          <FootGroup $width={39}><FootTool $width={20} aria-label="Full screen"><ExpandIcon /></FootTool></FootGroup>
        </Footer>

        <HighlightFrame />
        <HighlightArrow width="210" height="150" viewBox="0 0 210 150" fill="none" stroke="#f70000" strokeWidth="14" strokeLinecap="round" strokeLinejoin="round">
          <path d="M45 13L10 47l35 36M190 139C167 72 105 37 12 48" />
        </HighlightArrow>
        <BrandBubble aria-label="Open help menu"><SwirlIcon /><Badge>16</Badge></BrandBubble>
        <GuideBubble aria-label="Open guide"><GuideCore><SignpostIcon /></GuideCore></GuideBubble>
      </Shell>
    </>
  );
}
